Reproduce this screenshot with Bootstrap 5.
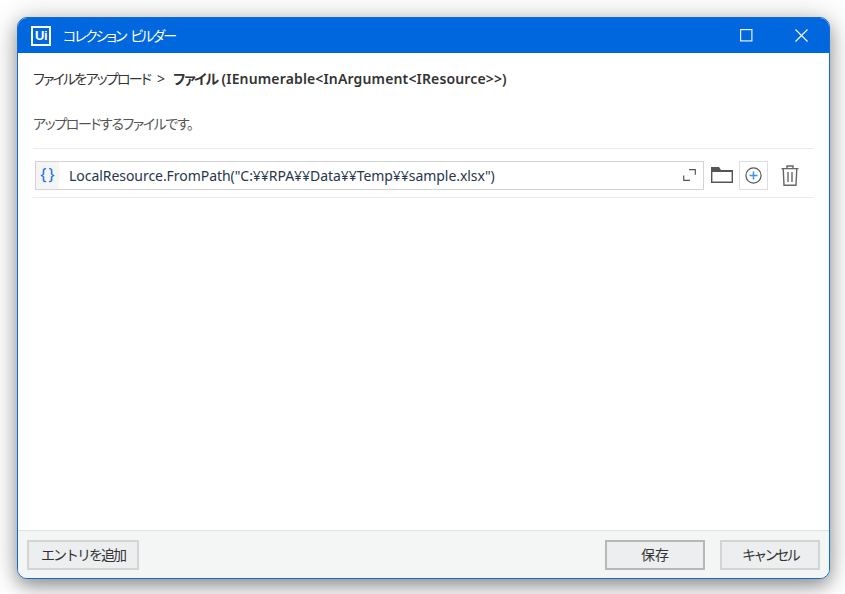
<!DOCTYPE html>
<html lang="ja">

<head>
    <meta charset="UTF-8">
    <title>コレクション ビルダー</title>
    <link rel="stylesheet" href="https://cdn.jsdelivr.net/npm/bootstrap@5.3.0/dist/css/bootstrap.min.css">
    <style>
        html, body { height: 594px; overflow: hidden; background: #fff; }
        body { font-family: "Noto Sans", "Noto Sans CJK JP", sans-serif; font-size: 14px; color: #2b2b2b; padding: 17px 15px 15px 17px; font-feature-settings: "palt"; }
        .app-window { height: 562px; border: 1px solid #0f6ad6; border-radius: 10px; background: #fff; overflow: hidden; box-shadow: 0 7px 16px rgba(0, 0, 0, .3), 0 3px 30px rgba(0, 0, 0, .25); }
        .app-title { height: 35px; background: #0067df; color: #fff; padding: 0 21px 0 13px; flex: none; }
        .app-logo { width: 20px; height: 20px; border: 2px solid #fff; font: 700 13px/16px "Liberation Sans", sans-serif; text-align: center; letter-spacing: -.5px; }
        .app-name { margin-left: 12px; font-size: 14px; letter-spacing: -1.9px; word-spacing: 3px; }
        .win-btn { display: block; }
        .win-max { margin-right: 42px; }
        .crumb-line { padding: 16px 15px 0; height: 61px; line-height: 20px; color: #333; }
        .crumb-root { letter-spacing: -1.8px; }
        .crumb-sep { margin: 0 8px 0 7px; }
        .crumb-kana { letter-spacing: -1.3px; margin-right: 1px; }
        .crumb-leaf { letter-spacing: .15px; word-spacing: -1px; }
        .hint-line { padding: 0 15px; height: 34px; line-height: 20px; color: #555; letter-spacing: -1.4px; }
        .entry-row { margin: 0 15px; height: 50px; border-top: 1px solid #ebebeb; border-bottom: 1px solid #ebebeb; padding: 4px 0 0 2px; }
        .expr-box { width: 669px; height: 29px; border: 1px solid #d3d3d3; background: #fff; }
        .expr-tag { width: 23px; height: 27px; background: #f5f5f6; color: #0f6fe6; font: 16px/25px "Noto Sans", sans-serif; text-align: center; word-spacing: -2px; flex: none; }
        .expr-text { padding: 1px 0 0 10px; font-size: 14px; color: #27364a; letter-spacing: -.05px; white-space: nowrap; }
        .expand-icon { margin-right: 7px; }
        .add-box { width: 29px; height: 29px; border: 1px solid #dedede; margin-left: 6px; }
        .folder-icon { margin-left: 7px; }
        .trash-icon { margin-left: 13px; }
        .app-foot { height: 48px; flex: none; background: #f4f5f5; border-top: 1px solid #e1e3e3; padding: 0 9px; }
        .foot-btn { height: 30px; padding: 0; font-size: 14px; line-height: 26px; border: 2px solid #d3d4d4; border-radius: 0; background: #edeef0; color: #333; }
        .foot-add { width: 112px; letter-spacing: -2px; }
        .foot-save { width: 100px; border-color: #b7b8b8; margin-right: 15px; }
        .foot-cancel { width: 100px; letter-spacing: -2.8px; }
    </style>
</head>

<body>
    <div class="app-window d-flex flex-column">
        <div class="app-title d-flex align-items-center">
            <div class="app-logo">Ui</div>
            <div class="app-name flex-grow-1">コレクション ビルダー</div>
            <svg class="win-btn win-max" width="13" height="13" viewBox="0 0 13 13" fill="none" stroke="#fff" stroke-opacity=".9" stroke-width="1.2">
                <rect x=".6" y=".6" width="11.3" height="11.3" />
            </svg>
            <svg class="win-btn" width="13" height="13" viewBox="0 0 13 13" fill="none" stroke="#fff" stroke-width="1.1">
                <path d="M.5.5l12 12M12.500.5l-12 12" />
            </svg>
        </div>

        <div class="flex-grow-1">
            <div class="crumb-line"><span class="crumb-root">ファイルをアップロード</span><span class="crumb-sep">&gt;</span><span class="fw-semibold"><span class="crumb-kana">ファイル</span><span class="crumb-leaf"> (IEnumerable&lt;InArgument&lt;IResource&gt;&gt;)</span></span></div>
            <div class="hint-line">アップロードするファイルです。</div>
            <div class="entry-row d-flex align-items-center">
                <div class="expr-box d-flex align-items-center">
                    <div class="expr-tag">{ }</div>
                    <div class="expr-text flex-grow-1">LocalResource.FromPath("C:¥¥RPA¥¥Data¥¥Temp¥¥sample.xlsx")</div>
                    <svg class="expand-icon" width="13" height="12" viewBox="0 0 13 12" fill="none" stroke="#555" stroke-width="1.2">
                        <path d="M6 .7h6.300v5M.7 6.500v4.800H7" />
                    </svg>
                </div>
                <svg class="folder-icon" width="22" height="16" viewBox="0 0 22 16" fill="#555">
                    <path d="M0 16V0h8l2 3h12v13zM1.400 14.600h19.200V5H1.400z" fill-rule="evenodd" />
                </svg>
                <div class="add-box d-flex align-items-center justify-content-center">
                    <svg width="17" height="17" viewBox="0 0 17 17" fill="none">
                        <circle cx="8.500" cy="8.500" r="7.600" stroke="#555" stroke-width="1.2" />
                        <path d="M8.500 4.500v8M4.500 8.500h8" stroke="#3d8fe8" stroke-width="1.500" />
                    </svg>
                </div>
                <svg class="trash-icon" width="18" height="21" viewBox="0 0 18 21" fill="none" stroke="#666" stroke-width="1.400">
                    <path d="M.5 3.600h17M6 3.400V1h6v2.400M2.200 3.600l.8 16.700h12l.8-16.700M7 7v10M11 7v10" />
                </svg>
            </div>
        </div>

        <div class="app-foot d-flex align-items-center">
            <button type="button" class="btn foot-btn foot-add me-auto">エントリを追加</button>
            <button type="button" class="btn foot-btn foot-save">保存</button>
            <button type="button" class="btn foot-btn foot-cancel">キャンセル</button>
        </div>
    </div>

    <script src="https://cdn.jsdelivr.net/npm/bootstrap@5.3.0/dist/js/bootstrap.bundle.min.js"></script>
</body>

</html>
